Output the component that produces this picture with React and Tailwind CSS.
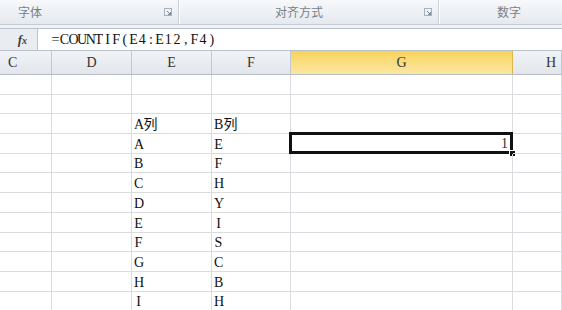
import React from 'react';

const serif = { fontFamily: '"Liberation Serif", "Noto Sans CJK SC", serif' };
const cjk = { fontFamily: '"Noto Sans CJK SC", "Noto Sans", sans-serif' };

// visible column widths: C (clipped), D, E, F, G, H (clipped)
const columns = [
  { name: 'C', width: 'w-[52px]' },
  { name: 'D', width: 'w-[80px]' },
  { name: 'E', width: 'w-[80px]' },
  { name: 'F', width: 'w-[79px]' },
  { name: 'G', width: 'w-[222px]' },
  { name: 'H', width: 'w-[49px]' },
];

const pairs = [
  ['A', 'E'],
  ['B', 'F'],
  ['C', 'H'],
  ['D', 'Y'],
  ['E', 'I'],
  ['F', 'S'],
  ['G', 'C'],
  ['H', 'B'],
  ['I', 'H'],
];

// Fixed-pitch text like the SimSun ASCII glyphs of the screenshot
const Pitch = ({ text, cell = 'w-[8.7px]', wide = 'w-[15px]' }) => (
  <span className="inline-flex">
    {[...text].map((ch, i) => (
      <span key={i} className={`${ch.charCodeAt(0) > 255 ? wide : cell} inline-block text-center`}>
        {ch}
      </span>
    ))}
  </span>
);

// Small dialog launcher in the ribbon group corner
const Launcher = () => (
  <svg width="8" height="8" viewBox="0 0 8 8" className="shrink-0">
    <rect x="0.5" y="0.5" width="7" height="7" fill="none" stroke="#a9b1bb" />
    <path d="M3 3 L6.5 6.5 M4 6.5 H6.5 V4" stroke="#7b8795" fill="none" />
  </svg>
);

const Ribbon = () => (
  <div className="flex h-[25px] bg-gradient-to-b from-[#f6f8fb] to-[#e5e9ee] border-b border-[#c6ccd4] text-[12px] text-[#7a7f86]" style={cjk}>
    <div className="w-[179px] flex items-center border-r border-[#c9cfd6]">
      <span className="ml-[18px]">字体</span>
      <span className="ml-auto mr-[6px]"><Launcher /></span>
    </div>
    <div className="w-[260px] flex items-center border-r border-[#c9cfd6] border-l border-l-white">
      <span className="ml-[95px]">对齐方式</span>
      <span className="ml-auto mr-[6px]"><Launcher /></span>
    </div>
    <div className="flex-1 flex items-center border-l border-l-white">
      <span className="ml-[57px]">数字</span>
    </div>
  </div>
);

const FormulaBar = () => (
  <div className="pt-[3px] bg-[#eef1f5]">
    <div className="flex h-[23px] bg-white border-y border-[#b9c1cb]">
      <div className="w-[38px] flex items-center justify-end pr-[10px] bg-[#e9edf2] border-r border-[#b9c1cb]">
        <span className="italic font-bold text-[13px] text-[#3b3f45]" style={{ fontFamily: '"Liberation Serif", serif' }}>
          f<span className="text-[10px]">x</span>
        </span>
      </div>
      <div className="flex items-center pl-[13px] text-[14px] text-[#111]" style={serif}>
        <Pitch text="=COUNTIF(E4:E12,F4)" />
      </div>
    </div>
  </div>
);

const Header = () => (
  <div className="flex h-[24px] bg-gradient-to-b from-[#f1f3f6] to-[#e2e6eb] border-b border-[#b7bec7] text-[14px] text-[#333]" style={serif}>
    {columns.map((c) => (
      <div
        key={c.name}
        className={`${c.width} shrink-0 flex items-center ${c.name === 'C' ? 'justify-start pl-[8px]' : c.name === 'H' ? 'justify-end pr-[5px]' : 'justify-center'} border-r border-[#c3c9d1] ${c.name === 'G' ? 'bg-gradient-to-b from-[#f8d35a] to-[#fbe7a2] border-[#e0b54a]' : ''}`}
      >
        {c.name}
      </div>
    ))}
  </div>
);

const Row = ({ cells, selected }) => (
  <div className="flex h-[19.7px] text-[14px] text-[#111]" style={serif}>
    {columns.map((c, i) => (
      <div
        key={c.name}
        className={`${c.width} shrink-0 relative flex items-end pb-[1px] pl-[2px] border-r border-b border-[#dadcdf]`}
      >
        {i === 2 || i === 3 ? <span className="leading-none"><Pitch text={cells[i - 2]} cell="w-[9px]" wide="w-[15px]" /></span> : null}
        {i === 4 && selected ? (
          <>
            <div className="absolute -left-[2px] -top-[2px] -right-[1px] -bottom-[1px] border-[3px] border-[#111] flex items-end justify-end pr-[2px] pb-0">
              <span className="leading-none text-[#333]">1</span>
            </div>
            <div className="absolute -right-[4px] -bottom-[4px] w-[7px] h-[7px] bg-[#111] border border-white" />
          </>
        ) : null}
      </div>
    ))}
  </div>
);

export default function App() {
  return (
    <div className="w-[562px] h-[310px] overflow-hidden bg-white">
      <Ribbon />
      <FormulaBar />
      <Header />
      <Row cells={['', '']} />
      <Row cells={['', '']} />
      <Row cells={['A列', 'B列']} />
      {pairs.map((p, i) => (
        <Row key={i} cells={p} selected={i === 0} />
      ))}
    </div>
  );
}
